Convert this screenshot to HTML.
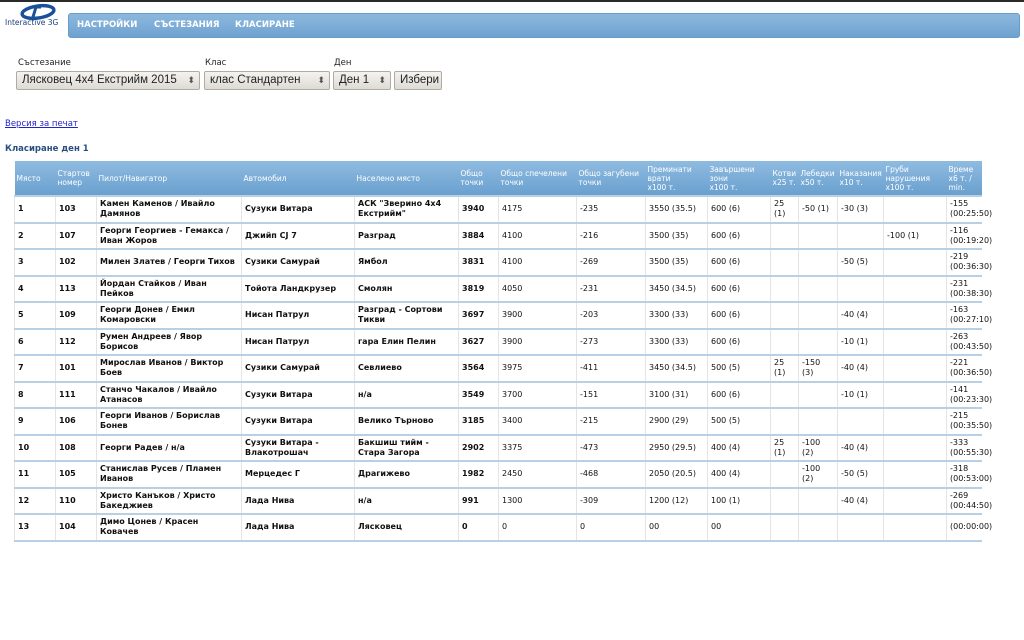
<!DOCTYPE html>
<html><head><meta charset="utf-8"><style>
*{margin:0;padding:0;box-sizing:border-box}
body{width:1024px;height:640px;background:#fff;font-family:"DejaVu Sans","Liberation Sans",sans-serif;position:relative;overflow:hidden}
.top{position:absolute;left:0;top:0;width:1024px;height:2px;background:#2a2a2a}
.nav{position:absolute;left:68px;top:13px;width:952px;height:25px;border-radius:3px;background:linear-gradient(#8cb8de,#6fa2d0);border:1px solid #6a9cc8}
.nav span{position:absolute;top:6px;color:#fff;font-weight:bold;font-size:8.5px}
.lbl{position:absolute;top:58px;font-size:8.5px;color:#222}
.sel{position:absolute;top:71px;height:19px;border:1px solid #b0aca4;border-radius:2px;background:linear-gradient(#f4f3f0,#dedbd5);font-family:"Liberation Sans",sans-serif;font-size:11.5px;color:#222;padding:2px 0 0 5px;white-space:nowrap;overflow:hidden}
.sel i{position:absolute;right:4px;top:3px;font-style:normal;font-size:9px;color:#555}
a{position:absolute;left:5px;top:119px;font-size:8.5px;color:#2222cc}
h3{position:absolute;left:5px;top:144px;font-size:8.5px;color:#2a4f80}
table{position:absolute;left:14px;top:161px;width:967px;border-collapse:collapse;table-layout:fixed;font-size:8px;color:#111}
th{background:linear-gradient(#8fbbe0,#6aa0cf);color:#fff;font-weight:normal;text-align:left;vertical-align:middle;padding:0 2px;height:35px;font-size:7.5px;line-height:9px}
td{border-top:2px solid #b8cfe4;border-left:1px solid #e4e4e4;height:26.5px;padding:0 3px;line-height:10px;vertical-align:middle}
tr:last-child td{border-bottom:2px solid #b8cfe4}
td:nth-child(-n+6){font-weight:bold}
</style></head><body>
<div class="top"></div>
<svg style="position:absolute;left:12px;top:3px" width="50" height="18" viewBox="0 0 50 18"><ellipse cx="26" cy="9" rx="16" ry="6" fill="none" stroke="#1a4f9a" stroke-width="3.5" transform="rotate(-8 26 9)"/><path d="M21 4 L29 4 M24 4 L21 14" stroke="#1a4f9a" stroke-width="3"/></svg>
<div style="position:absolute;left:5px;top:18px;font-size:7.5px;color:#1a3f80">Interactive 3G</div>
<div class="nav"><span style="left:8px">НАСТРОЙКИ</span><span style="left:85px">СЪСТЕЗАНИЯ</span><span style="left:166px">КЛАСИРАНЕ</span></div>
<div class="lbl" style="left:18px">Състезание</div><div class="lbl" style="left:205px">Клас</div><div class="lbl" style="left:334px">Ден</div>
<div class="sel" style="left:16px;width:184px">Лясковец 4x4 Екстрийм 2015<i>⬍</i></div>
<div class="sel" style="left:204px;width:126px">клас Стандартен<i>⬍</i></div>
<div class="sel" style="left:333px;width:58px">Ден 1<i>⬍</i></div>
<div class="sel" style="left:394px;width:48px">Избери</div>
<a href="#">Версия за печат</a>
<h3>Класиране ден 1</h3>
<table>
<colgroup><col style="width:41px"><col style="width:41px"><col style="width:145px"><col style="width:113px"><col style="width:104px"><col style="width:40px"><col style="width:78px"><col style="width:69px"><col style="width:62px"><col style="width:63px"><col style="width:28px"><col style="width:39px"><col style="width:46px"><col style="width:63px"><col style="width:35px"></colgroup>
<tr><th>Място</th><th>Стартов номер</th><th>Пилот/Навигатор</th><th>Автомобил</th><th>Населено място</th><th>Общо точки</th><th>Общо спечелени точки</th><th>Общо загубени точки</th><th>Преминати врати<br>x100 т.</th><th>Завършени зони<br>x100 т.</th><th>Котви x25 т.</th><th>Лебедки x50 т.</th><th>Наказания x10 т.</th><th>Груби нарушения x100 т.</th><th>Време x6 т. / min.</th></tr>
<tr><td>1</td><td>103</td><td>Камен Каменов / Ивайло Дамянов</td><td>Сузуки Витара</td><td>АСК "Зверино 4x4 Екстрийм"</td><td>3940</td><td>4175</td><td>-235</td><td>3550 (35.5)</td><td>600 (6)</td><td>25 (1)</td><td>-50 (1)</td><td>-30 (3)</td><td></td><td>-155 (00:25:50)</td></tr>
<tr><td>2</td><td>107</td><td>Георги Георгиев - Гемакса / Иван Жоров</td><td>Джийп CJ 7</td><td>Разград</td><td>3884</td><td>4100</td><td>-216</td><td>3500 (35)</td><td>600 (6)</td><td></td><td></td><td></td><td>-100 (1)</td><td>-116 (00:19:20)</td></tr>
<tr><td>3</td><td>102</td><td>Милен Златев / Георги Тихов</td><td>Сузики Самурай</td><td>Ямбол</td><td>3831</td><td>4100</td><td>-269</td><td>3500 (35)</td><td>600 (6)</td><td></td><td></td><td>-50 (5)</td><td></td><td>-219 (00:36:30)</td></tr>
<tr><td>4</td><td>113</td><td>Йордан Стайков / Иван Пейков</td><td>Тойота Ландкрузер</td><td>Смолян</td><td>3819</td><td>4050</td><td>-231</td><td>3450 (34.5)</td><td>600 (6)</td><td></td><td></td><td></td><td></td><td>-231 (00:38:30)</td></tr>
<tr><td>5</td><td>109</td><td>Георги Донев / Емил Комаровски</td><td>Нисан Патрул</td><td>Разград - Сортови Тикви</td><td>3697</td><td>3900</td><td>-203</td><td>3300 (33)</td><td>600 (6)</td><td></td><td></td><td>-40 (4)</td><td></td><td>-163 (00:27:10)</td></tr>
<tr><td>6</td><td>112</td><td>Румен Андреев / Явор Борисов</td><td>Нисан Патрул</td><td>гара Елин Пелин</td><td>3627</td><td>3900</td><td>-273</td><td>3300 (33)</td><td>600 (6)</td><td></td><td></td><td>-10 (1)</td><td></td><td>-263 (00:43:50)</td></tr>
<tr><td>7</td><td>101</td><td>Мирослав Иванов / Виктор Боев</td><td>Сузики Самурай</td><td>Севлиево</td><td>3564</td><td>3975</td><td>-411</td><td>3450 (34.5)</td><td>500 (5)</td><td>25 (1)</td><td>-150 (3)</td><td>-40 (4)</td><td></td><td>-221 (00:36:50)</td></tr>
<tr><td>8</td><td>111</td><td>Станчо Чакалов / Ивайло Атанасов</td><td>Сузуки Витара</td><td>н/а</td><td>3549</td><td>3700</td><td>-151</td><td>3100 (31)</td><td>600 (6)</td><td></td><td></td><td>-10 (1)</td><td></td><td>-141 (00:23:30)</td></tr>
<tr><td>9</td><td>106</td><td>Георги Иванов / Борислав Бонев</td><td>Сузуки Витара</td><td>Велико Търново</td><td>3185</td><td>3400</td><td>-215</td><td>2900 (29)</td><td>500 (5)</td><td></td><td></td><td></td><td></td><td>-215 (00:35:50)</td></tr>
<tr><td>10</td><td>108</td><td>Георги Радев / н/а</td><td>Сузуки Витара - Влакотрошач</td><td>Бакшиш тийм - Стара Загора</td><td>2902</td><td>3375</td><td>-473</td><td>2950 (29.5)</td><td>400 (4)</td><td>25 (1)</td><td>-100 (2)</td><td>-40 (4)</td><td></td><td>-333 (00:55:30)</td></tr>
<tr><td>11</td><td>105</td><td>Станислав Русев / Пламен Иванов</td><td>Мерцедес Г</td><td>Драгижево</td><td>1982</td><td>2450</td><td>-468</td><td>2050 (20.5)</td><td>400 (4)</td><td></td><td>-100 (2)</td><td>-50 (5)</td><td></td><td>-318 (00:53:00)</td></tr>
<tr><td>12</td><td>110</td><td>Христо Канъков / Христо Бакеджиев</td><td>Лада Нива</td><td>н/а</td><td>991</td><td>1300</td><td>-309</td><td>1200 (12)</td><td>100 (1)</td><td></td><td></td><td>-40 (4)</td><td></td><td>-269 (00:44:50)</td></tr>
<tr><td>13</td><td>104</td><td>Димо Цонев / Красен Ковачев</td><td>Лада Нива</td><td>Лясковец</td><td>0</td><td>0</td><td>0</td><td>00</td><td>00</td><td></td><td></td><td></td><td></td><td>(00:00:00)</td></tr>
</table>
</body></html>
